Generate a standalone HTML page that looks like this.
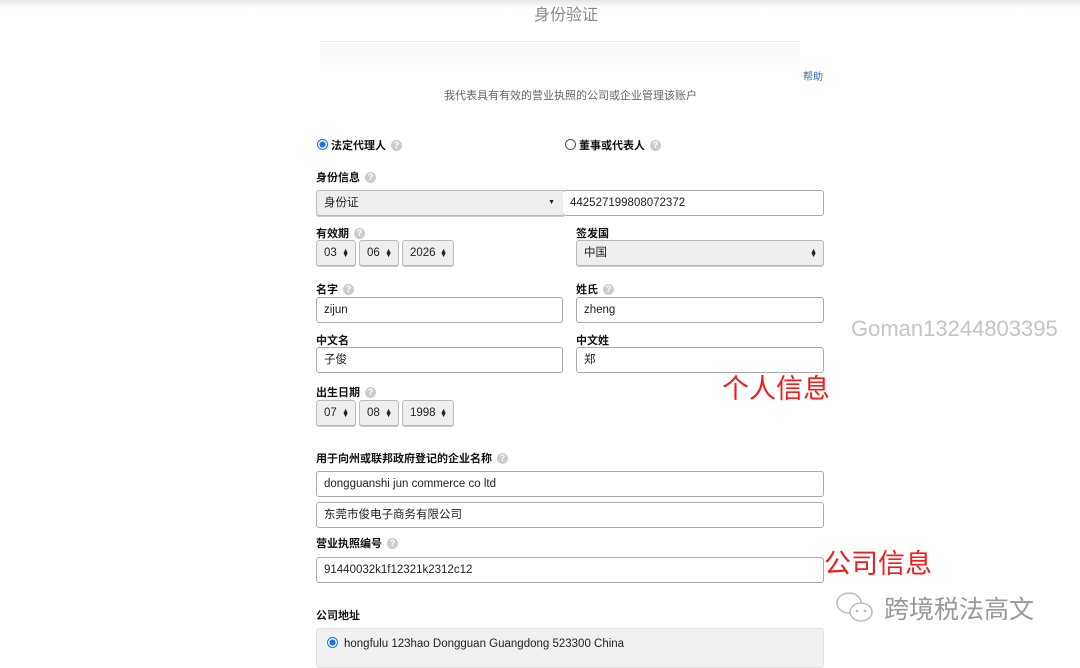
<!DOCTYPE html><html><head><meta charset="utf-8"><style>
body{margin:0;width:1080px;height:657px;background:#fff;position:relative;overflow:hidden;font-family:"Liberation Sans","Noto Sans CJK SC",sans-serif;color:#111}
.a{position:absolute;white-space:nowrap}
.lb{font-size:11px;font-weight:bold;color:#111}
.q{display:inline-block;width:11px;height:11px;border-radius:50%;background:#ccc;color:#fff;font-size:9px;text-align:center;line-height:11px;margin-left:5px;vertical-align:1px;font-weight:bold}
.in{position:absolute;box-sizing:border-box;border:1px solid #aaa;border-radius:3px;background:#fff;font-size:11.5px;padding-left:7px;color:#222}
.sel{position:absolute;box-sizing:border-box;border:1px solid #bbb;border-radius:3px;background:#eceef0;font-size:11.5px;padding-left:7px;color:#222;box-shadow:0 1px 0 #ccc}
.ar{position:absolute;right:6px;font-size:7px;line-height:4px;top:9px}
</style></head><body>
<div class="a" style="left:0;top:0;width:1080px;height:9px;background:linear-gradient(#e6e6e6,#fff)"></div>
<div class="a" style="left:320px;top:44px;width:480px;height:26px;background:linear-gradient(#f7f7f7,#fff)"></div>
<div class="a" style="left:320px;top:41px;width:480px;height:1px;background:#ececec"></div>
<div class="a" style="left:534px;top:1px;font-size:16px;color:#888">身份验证</div>
<div class="a" style="left:803px;top:68px;font-size:10px;color:#2a6fb5">帮助</div>
<div class="a" style="left:444px;top:87px;font-size:11px;color:#666">我代表具有有效的营业执照的公司或企业管理该账户</div>
<div class="a lb" style="left:317px;top:137px"><span style="display:inline-block;width:9px;height:9px;border:1px solid #1a73e8;border-radius:50%;background:radial-gradient(#1a73e8 45%,#fff 50%);vertical-align:-1px;margin-right:3px"></span>法定代理人<span class="q">?</span></div>
<div class="a lb" style="left:565px;top:137px"><span style="display:inline-block;width:9px;height:9px;border:1px solid #555;border-radius:50%;vertical-align:-1px;margin-right:3px"></span>董事或代表人<span class="q">?</span></div>
<div class="a lb" style="left:316px;top:169px">身份信息<span class="q">?</span></div>
<div class="sel" style="left:316px;top:190px;width:248px;height:26px;line-height:24px;border-radius:3px 0 0 3px">身份证<span class="a" style="right:8px;top:0;font-size:7px">▼</span></div>
<div class="in" style="left:563px;top:190px;width:261px;height:26px;line-height:24px;border-left:none">442527199808072372</div>
<div class="a lb" style="left:316px;top:225px">有效期<span class="q">?</span></div>
<div class="a lb" style="left:576px;top:225px">签发国</div>
<div class="sel" style="left:316px;top:240px;width:40px;height:26px;line-height:24px">03<span class="ar">▲<br>▼</span></div>
<div class="sel" style="left:359px;top:240px;width:40px;height:26px;line-height:24px">06<span class="ar">▲<br>▼</span></div>
<div class="sel" style="left:402px;top:240px;width:52px;height:26px;line-height:24px">2026<span class="ar">▲<br>▼</span></div>
<div class="sel" style="left:576px;top:240px;width:248px;height:26px;line-height:24px">中国<span class="ar">▲<br>▼</span></div>
<div class="a lb" style="left:316px;top:281px">名字<span class="q">?</span></div>
<div class="a lb" style="left:576px;top:281px">姓氏<span class="q">?</span></div>
<div class="in" style="left:316px;top:297px;width:247px;height:26px;line-height:24px">zijun</div>
<div class="in" style="left:576px;top:297px;width:248px;height:26px;line-height:24px">zheng</div>
<div class="a lb" style="left:316px;top:332px">中文名</div>
<div class="a lb" style="left:576px;top:332px">中文姓</div>
<div class="in" style="left:316px;top:347px;width:247px;height:26px;line-height:24px">子俊</div>
<div class="in" style="left:576px;top:347px;width:248px;height:26px;line-height:24px">郑</div>
<div class="a lb" style="left:316px;top:384px">出生日期<span class="q">?</span></div>
<div class="sel" style="left:316px;top:400px;width:40px;height:26px;line-height:24px">07<span class="ar">▲<br>▼</span></div>
<div class="sel" style="left:359px;top:400px;width:40px;height:26px;line-height:24px">08<span class="ar">▲<br>▼</span></div>
<div class="sel" style="left:402px;top:400px;width:52px;height:26px;line-height:24px">1998<span class="ar">▲<br>▼</span></div>
<div class="a lb" style="left:316px;top:450px">用于向州或联邦政府登记的企业名称<span class="q">?</span></div>
<div class="in" style="left:316px;top:471px;width:508px;height:26px;line-height:24px">dongguanshi jun commerce co ltd</div>
<div class="in" style="left:316px;top:502px;width:508px;height:26px;line-height:24px">东莞市俊电子商务有限公司</div>
<div class="a lb" style="left:316px;top:535px">营业执照编号<span class="q">?</span></div>
<div class="in" style="left:316px;top:557px;width:508px;height:26px;line-height:24px">91440032k1f12321k2312c12</div>
<div class="a lb" style="left:316px;top:607px">公司地址</div>
<div class="a" style="left:316px;top:628px;width:508px;height:40px;background:#f0f0f0;border:1px solid #e2e2e2;border-radius:3px;box-sizing:border-box"></div>
<div class="a" style="left:327px;top:637px;font-size:11.5px;color:#222"><span style="display:inline-block;width:9px;height:9px;border:1px solid #1a73e8;border-radius:50%;background:radial-gradient(#1a73e8 45%,#fff 50%);vertical-align:-1px;margin-right:6px"></span>hongfulu 123hao Dongguan Guangdong 523300 China</div>
<div class="a" style="left:851px;top:316px;font-size:22px;color:#c4c4c4">Goman13244803395</div>
<div class="a" style="left:722px;top:367px;font-size:27px;color:#f21c1c">个人信息</div>
<div class="a" style="left:824px;top:542px;font-size:27px;color:#f21c1c">公司信息</div>
<svg class="a" style="left:834px;top:590px" width="44" height="36" viewBox="0 0 44 36"><ellipse cx="15" cy="13" rx="12" ry="10" fill="none" stroke="#bbb" stroke-width="1.5"/><ellipse cx="27" cy="22" rx="11" ry="9" fill="#fff" stroke="#bbb" stroke-width="1.5"/><circle cx="23" cy="21" r="1.3" fill="#bbb"/><circle cx="31" cy="21" r="1.3" fill="#bbb"/></svg>
<div class="a" style="left:884px;top:590px;font-size:25px;color:#999">跨境税法高文</div>
</body></html>
